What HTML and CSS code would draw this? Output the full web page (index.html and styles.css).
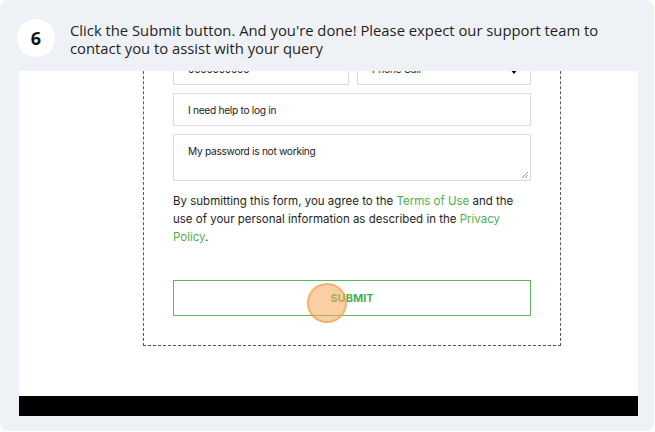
FILE: index.html
```html
<!DOCTYPE html>
<html>
<head>
<meta charset="utf-8">
<link rel="stylesheet" href="styles.css">
</head>
<body>
<div class="card">
  <div class="header">
    <div class="step">6</div>
    <p class="title">Click the Submit button. And you're done! Please expect our support team to contact you to assist with your query</p>
  </div>
  <div class="shot">
    <div class="page">
      <form class="form">
        <div class="row">
          <div class="field half">0000000000</div>
          <div class="field half select"><span>Phone Call</span><span class="arrow"></span></div>
        </div>
        <div class="field">I need help to log in</div>
        <div class="field area">My password is not working
          <svg class="grip" width="8" height="8" viewBox="0 0 8 8"><path d="M7 1L1 7M7 4L4 7" stroke="#999" stroke-width="1"/></svg>
        </div>
        <p class="policy">By submitting this form, you agree to the <a>Terms of Use</a> and the use of your personal information as described in the <a>Privacy Policy</a>.</p>
        <div class="submit">SUBMIT<span class="click"></span></div>
      </form>
    </div>
    <div class="bar"></div>
  </div>
</div>
</body>
</html>
```
FILE: styles.css
```css
* { box-sizing: border-box; }
body { margin: 0; background: #fff; }
.card {
  width: 654px;
  height: 431px;
  background: #eef2f7;
  border-radius: 8px;
  display: flex;
  flex-direction: column;
  padding: 0 16px 15px 19px;
}
.header {
  display: flex;
  align-items: flex-start;
  height: 71px;
  padding-top: 19px;
}
.step {
  width: 38px;
  height: 38px;
  border-radius: 50%;
  background: #fff;
  flex: none;
  display: flex;
  align-items: center;
  justify-content: center;
  font: 700 18px "Open Sans", sans-serif;
  color: #111;
  margin-left: -2px;
}
.title {
  margin: 2px 0 0 15px;
  font: 400 14.8px/18px "Open Sans", sans-serif;
  color: #1f1f1f;
  width: 545px;
}
.shot {
  flex: 1;
  background: #fff;
  display: flex;
  flex-direction: column;
  overflow: hidden;
}
.page { flex: 1; }
.form {
  margin: -20px 0 0 124px;
  width: 418px;
  border: 1px dashed #555;
  padding: 0 29px 29px 29px;
  font-family: Inter, sans-serif;
  display: flex;
  flex-direction: column;
  gap: 8px;
}
.row { display: flex; gap: 8px; }
.field {
  height: 33px;
  border: 1px solid #ddd;
  font-size: 10.2px;
  color: #222;
  padding: 0 14px;
  display: flex;
  align-items: center;
  letter-spacing: -0.3px;
}
.half { flex: 1; }
.select { justify-content: space-between; padding-right: 12px; }
.arrow {
  width: 0; height: 0;
  border-left: 4px solid transparent;
  border-right: 4px solid transparent;
  border-top: 5px solid #000;
  margin-top: 6px;
}
.area {
  height: 47px;
  align-items: flex-start;
  padding-top: 10px;
  position: relative;
}
.grip { position: absolute; right: 1px; bottom: 1px; }
.policy {
  margin: 3px 0 0;
  font-size: 11.5px;
  line-height: 18px;
  color: #1e1e1e;
}
.policy a { color: #4caf50; }
.submit {
  margin-top: 26px;
  height: 36px;
  border: 1px solid #5cb85c;
  display: flex;
  align-items: center;
  justify-content: center;
  font-size: 11px;
  font-weight: 700;
  color: #4caf50;
  position: relative;
}
.click {
  position: absolute;
  width: 40px;
  height: 40px;
  border-radius: 50%;
  left: 133px;
  top: 2px;
  background: rgba(246, 168, 92, 0.55);
  border: 2px solid rgba(240, 150, 70, 0.55);
}
.bar { height: 20px; background: #000; flex: none; }
```
